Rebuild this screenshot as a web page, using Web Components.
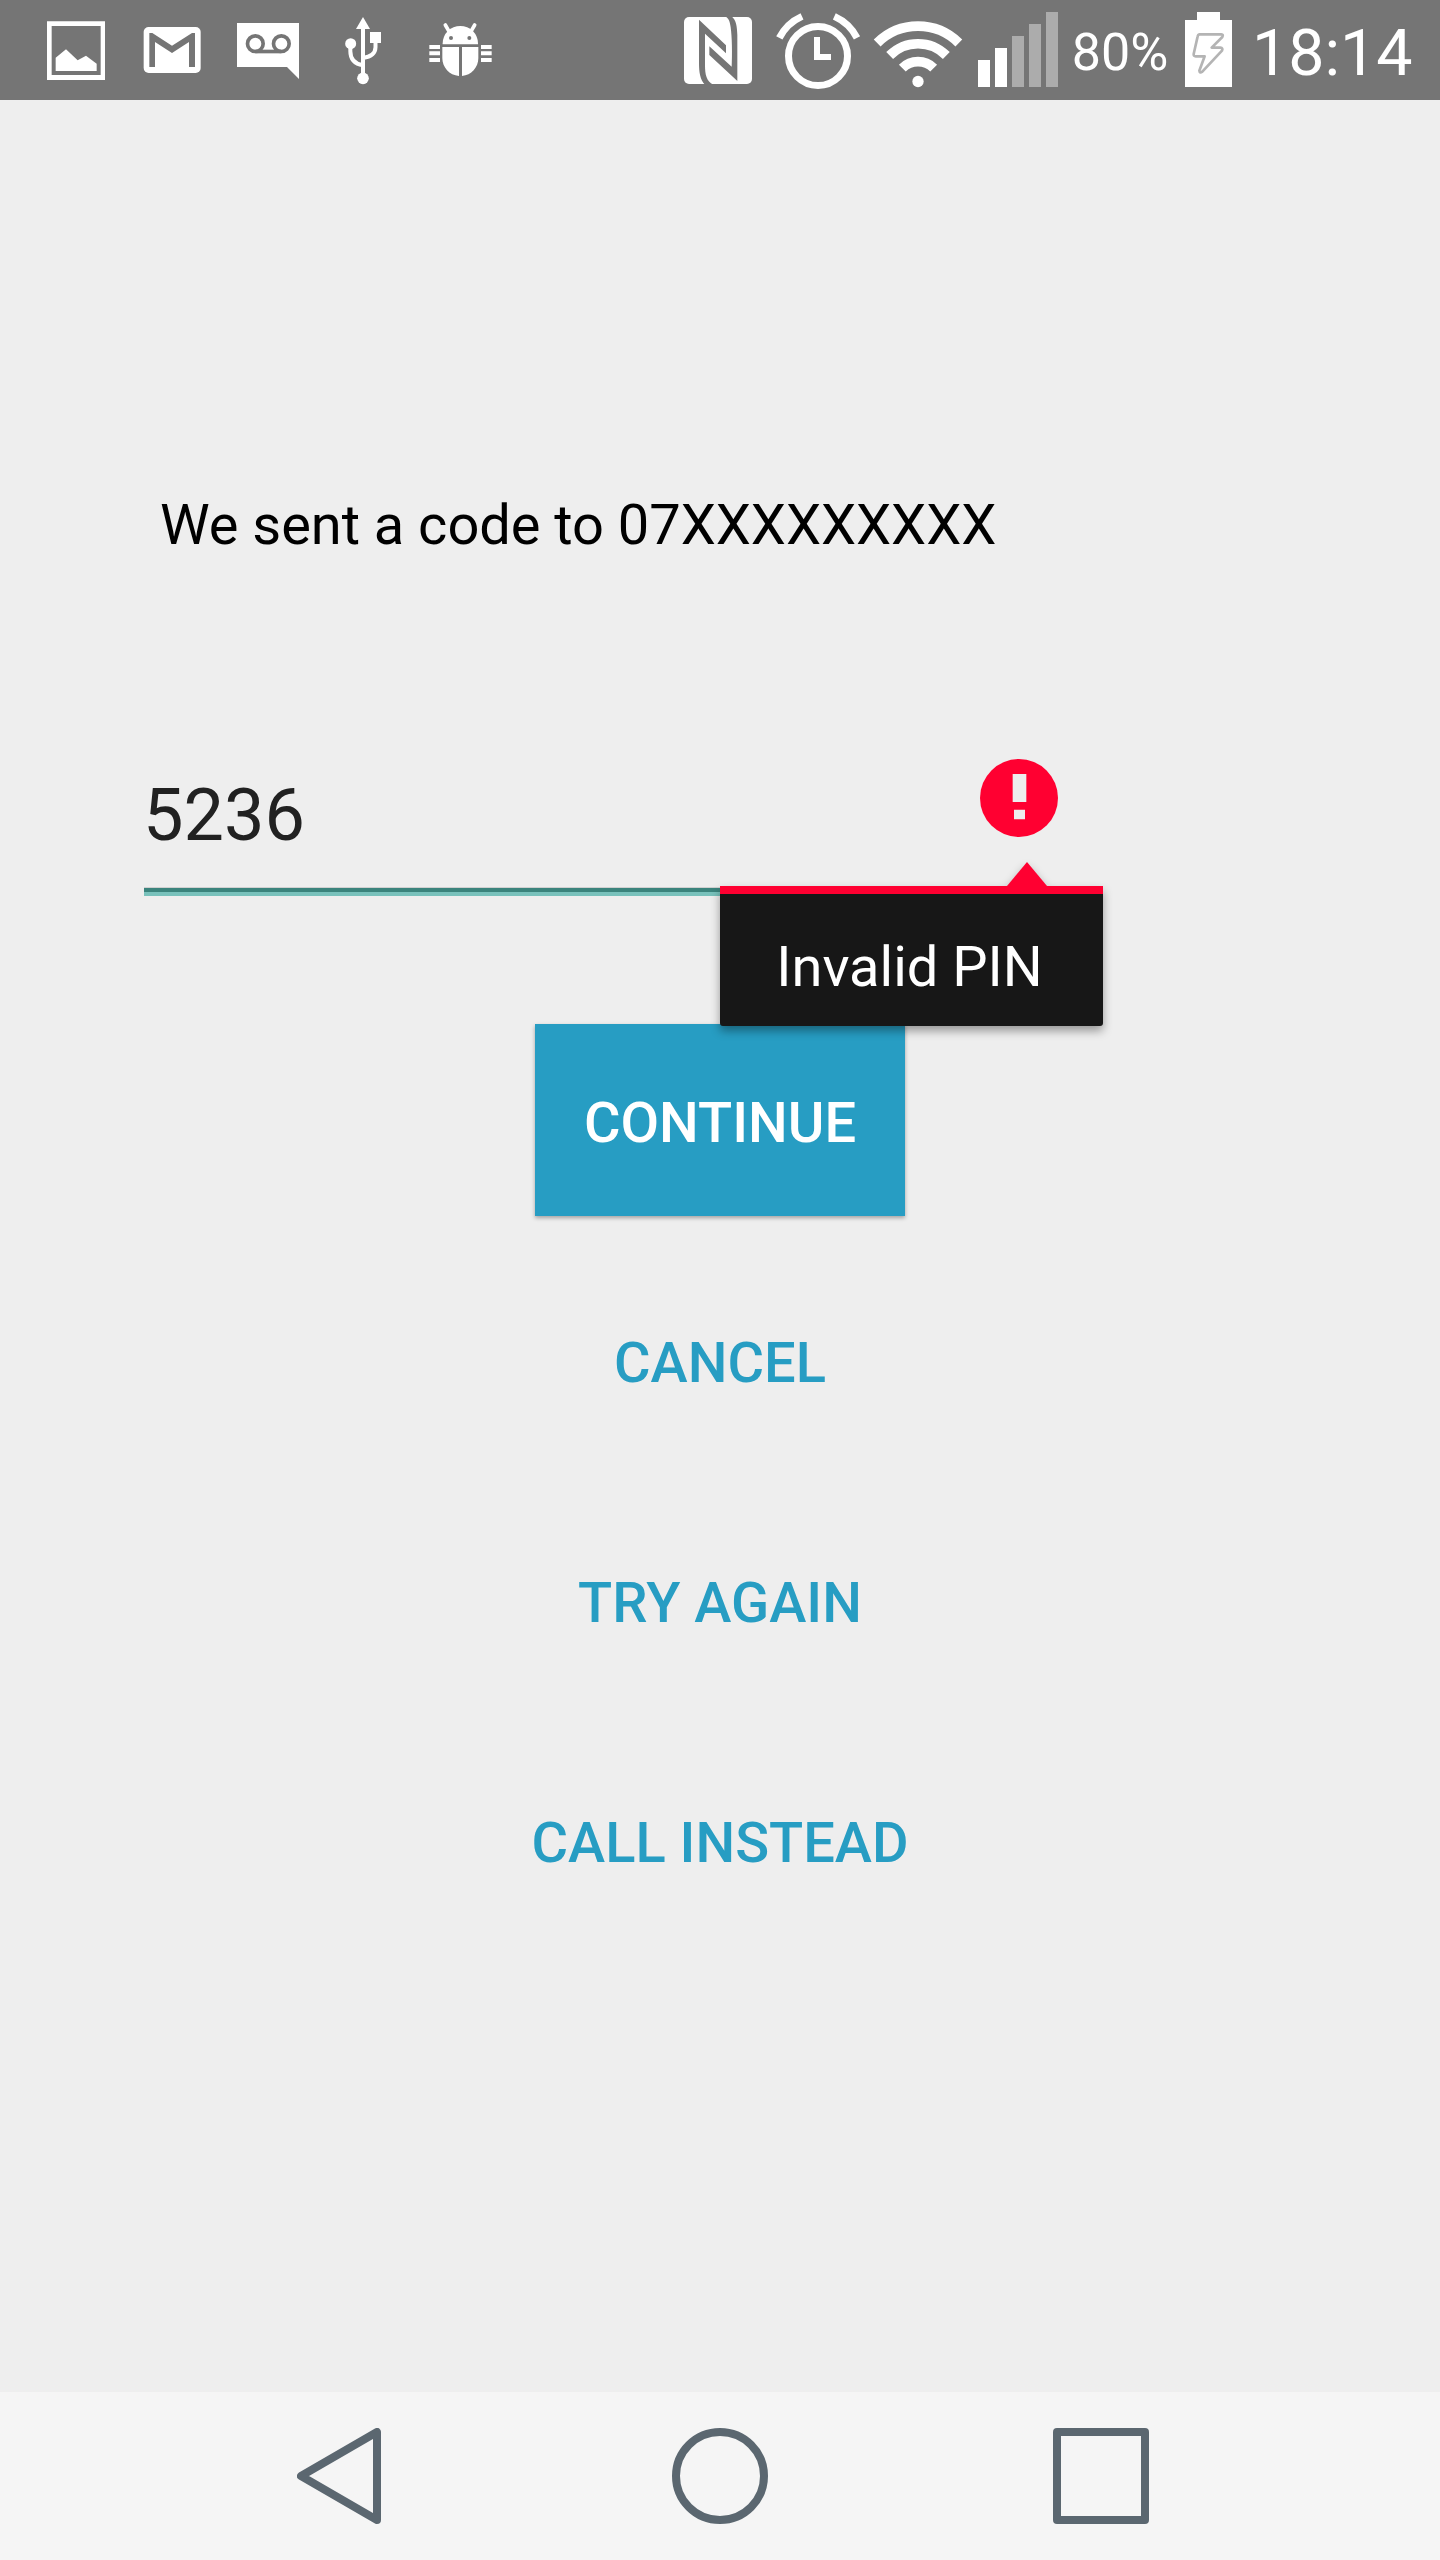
<!DOCTYPE html>
<html lang="en">
<head>
<meta charset="utf-8">
<title>Verify PIN</title>
<style>
  html, body { margin: 0; padding: 0; background: #eee; }
  body { width: 1440px; height: 2560px; overflow: hidden; font-family: Roboto, sans-serif; }
</style>
</head>
<body>
<pin-screen></pin-screen>
<script>
const define = (name, html) => {
  const t = document.createElement('template');
  t.innerHTML = html;
  customElements.define(name, class extends HTMLElement {
    constructor() {
      super();
      this.attachShadow({ mode: 'open' }).appendChild(t.content.cloneNode(true));
    }
  });
};

/* Status glyphs: [viewBox x, viewBox width, markup]; three units per CSS pixel. */
const GLYPHS = {
  image: [84, 288, `<path fill-rule="evenodd" d="M141 64H315V240H141ZM155 78V225H302V78Z"/><path d="M167 213V173L198 148L233 181L258 167L290 191V213Z"/>`],
  mail: [372, 288, `<rect x="431" y="81" width="171" height="138" rx="15"/><path fill="#757575" d="M448 201V99H457L516 137L576 99H585V201H567V126L516 159L465 126V201Z"/>`],
  voicemail: [660, 288, `<path d="M711 69H897V237L861 201H711Z"/><g fill="none" stroke="#757575" stroke-width="11"><circle cx="766" cy="131" r="23.5"/><circle cx="844" cy="131" r="23.5"/><path d="M766 154.500H844"/></g>`],
  usb: [48, 288, `<path d="M189 51L210 87H168Z"/><circle cx="189" cy="235" r="17.500"/><circle cx="152" cy="131" r="16.500"/><rect x="210" y="96" width="33" height="33"/><path fill="none" stroke="#fff" stroke-width="12" d="M189 80V225M151 140V154Q151 190 189 196M226.500 125V142Q226 169 189 174"/>`],
  bug: [336, 288, `<path d="M428 133V130A53 52 0 0 1 534 130V133Z"/><path stroke="#fff" stroke-width="11" stroke-linecap="round" d="M436 75L447 94M524 75L513 94"/><circle cx="453" cy="114" r="6" fill="#757575"/><circle cx="508" cy="114" r="6" fill="#757575"/><path d="M427 141H477V228C448 226 427 202 427 175ZM486 141H535V175C535 202 514 226 486 228Z"/><path d="M388 135H420V147H388ZM388 154H420V166H388ZM388 174H420V186H388ZM543 135H575V147H543ZM543 154H575V166H543ZM543 174H575V186H543Z"/>`],
  nfc: [18, 258, `<rect x="42" y="51" width="204" height="201" rx="15"/><path fill="#757575" d="M87 59L168 136V160L105 101V195C105 222 109 245 130 254H105C90 240 87 215 87 190ZM165 49H184C199 59 201 80 202 105V243L118 165V139L185 200C187 165 186 110 182 82C180 65 176 55 165 49Z"/>`],
  alarm: [276, 318, `<g fill="none" stroke="#fff"><circle cx="444" cy="168" r="88.500" stroke-width="21"/><path stroke-width="21" d="M328 113.500Q350 70 396 49M561 113.500Q539 70 493 49"/></g><path d="M432 111H450V162H483V180H432Z"/>`],
  wifi: [594, 300, `<g fill="none" stroke="#fff" stroke-width="29"><path d="M621.500 129A174 174 0 0 1 866.500 129"/><path d="M659 166.500A120 120 0 0 1 829 166.500"/><path d="M697 204.500A66.500 66.500 0 0 1 791 204.500"/></g><circle cx="744" cy="244.500" r="17"/>`],
  signal: [54, 294, `<path d="M84 180H120V261H84ZM135 144H171V261H135Z"/><path fill="#acacac" d="M186 108H222V261H186ZM237 72H273V261H237ZM288 36H324V261H288Z"/>`],
  battery: [60, 171, `<path d="M75 60H111V36H180V60H216V261H75Z"/><path fill="none" stroke="#b4b4b4" stroke-width="8" stroke-linejoin="round" d="M118 103H184Q191 103 187 111L155 143H181Q190 144 186 152L127 215Q119 221 118 212L134 169H107Q100 169 101 162L113 109Q114 104 118 103Z"/>`]
};

customElements.define('status-glyph', class extends HTMLElement {
  connectedCallback() {
    const [x, w, body] = GLYPHS[this.getAttribute('name')];
    const root = this.attachShadow({ mode: 'open' });
    root.innerHTML = `<style>:host{display:block;flex:none}svg{display:block}</style>
      <svg width="${w / 3}" height="100" viewBox="${x} 0 ${w} 300" fill="#fff">${body}</svg>`;
  }
});

define('status-bar', `
<style>
  :host { display: flex; height: 100px; background: #757575; color: #fff; justify-content: space-between; flex: none; }
  .group { display: flex; }
  .left { padding-left: 28px; }
  .pct { width: 114px; box-sizing: border-box; padding-right: 6px; text-align: center; font-size: 52px; line-height: 105px; }
  .clock { width: 203px; box-sizing: border-box; padding-left: 15px; font-size: 64.5px; line-height: 106px; white-space: nowrap; }
</style>
<div class="group left">
  <status-glyph name="image"></status-glyph><status-glyph name="mail"></status-glyph><status-glyph name="voicemail"></status-glyph><status-glyph name="usb"></status-glyph><status-glyph name="bug"></status-glyph>
</div>
<div class="group">
  <status-glyph name="nfc"></status-glyph><status-glyph name="alarm"></status-glyph><status-glyph name="wifi"></status-glyph><status-glyph name="signal"></status-glyph>
  <div class="pct">80%</div>
  <status-glyph name="battery"></status-glyph>
  <div class="clock">18:14</div>
</div>`);

define('error-tip', `
<style>
  :host { display: block; width: 383px; filter: drop-shadow(0 5px 5px rgba(0,0,0,.36)); }
  svg { display: block; margin-left: 287px; }
  .bar { height: 8px; background: #ff0031; }
  .body { height: 132px; background: #171717; border-radius: 0 0 3px 3px; color: #fff; font-size: 56px; line-height: 146px; text-align: center; box-sizing: border-box; padding-right: 4px; overflow: hidden; white-space: nowrap; }
</style>
<svg width="40" height="24" viewBox="0 0 40 24"><path d="M20 0L40 24H0Z" fill="#ff0031"/></svg>
<div class="bar"></div>
<div class="body"><slot></slot></div>`);

define('pin-field', `
<style>
  :host { display: block; position: relative; width: 939px; height: 162px; }
  .row { display: flex; justify-content: space-between; height: 153px; color: #212121; font-size: 72px; line-height: 163px; }
  .row span { margin-left: -1px; }
  .row svg { margin: 25px 25px 0 0; }
  .line { height: 4px; border-top: 1px solid #d0d0d0; border-bottom: 4px solid #78c1bb; background: #3a837c; }
  .tip { position: absolute; left: 576px; top: 128px; }
</style>
<div class="row"><span><slot></slot></span>
  <svg width="78" height="78" viewBox="838 57 234 234"><circle cx="955" cy="174" r="117" fill="#ff0031"/><path fill="#eee" d="M936 102H977V186H936ZM940 209H973V238H940Z"/></svg>
</div>
<div class="line"></div>
<div class="tip"><slot name="error"></slot></div>`);

define('flat-button', `
<style>
  :host { display: block; flex: none; }
  button { display: block; box-sizing: border-box; height: 192px; min-width: 352px; border: 0; padding: 7px 0 0; margin: 0; background: none; color: #279dc3; font: 500 56px/185px Roboto, sans-serif; text-transform: uppercase; white-space: nowrap; }
  :host([raised]) button { width: 370px; background: #279dc3; color: #fff; box-shadow: 0 2px 4px rgba(0,0,0,.32); }
</style>
<button type="button"><slot></slot></button>`);

define('nav-bar', `
<style>
  :host { display: flex; height: 168px; background: #f5f5f5; align-items: center; justify-content: space-between; flex: none; box-sizing: border-box; padding: 0 291px 0 297px; }
  svg { display: block; fill: none; stroke: #5b6770; stroke-width: 8; stroke-linejoin: round; }
  .home { margin-left: 6px; }
</style>
<svg width="84" height="96" viewBox="0 0 84 96"><path d="M4 48L80 4V92Z"/></svg>
<svg class="home" width="96" height="96" viewBox="0 0 96 96"><circle cx="48" cy="48" r="44"/></svg>
<svg width="96" height="96" viewBox="0 0 96 96"><rect x="4" y="4" width="88" height="88"/></svg>`);

define('pin-screen', `
<style>
  :host { display: flex; flex-direction: column; width: 1440px; height: 2560px; background: #eee; }
  main { flex: 1; display: flex; flex-direction: column; padding-top: 392px; }
  .msg { margin: 0 0 0 160px; font-size: 56px; line-height: 66px; letter-spacing: -.04px; color: #000; white-space: nowrap; }
  pin-field { margin: 176px 0 0 144px; z-index: 1; }
  .actions { display: flex; flex-direction: column; align-items: center; gap: 48px; margin-top: 128px; }
</style>
<status-bar></status-bar>
<main>
  <p class="msg">We sent a code to 07XXXXXXXXX</p>
  <pin-field>5236<error-tip slot="error">Invalid PIN</error-tip></pin-field>
  <div class="actions">
    <flat-button raised>Continue</flat-button>
    <flat-button>Cancel</flat-button>
    <flat-button>Try again</flat-button>
    <flat-button>Call instead</flat-button>
  </div>
</main>
<nav-bar></nav-bar>`);
</script>
</body>
</html>
